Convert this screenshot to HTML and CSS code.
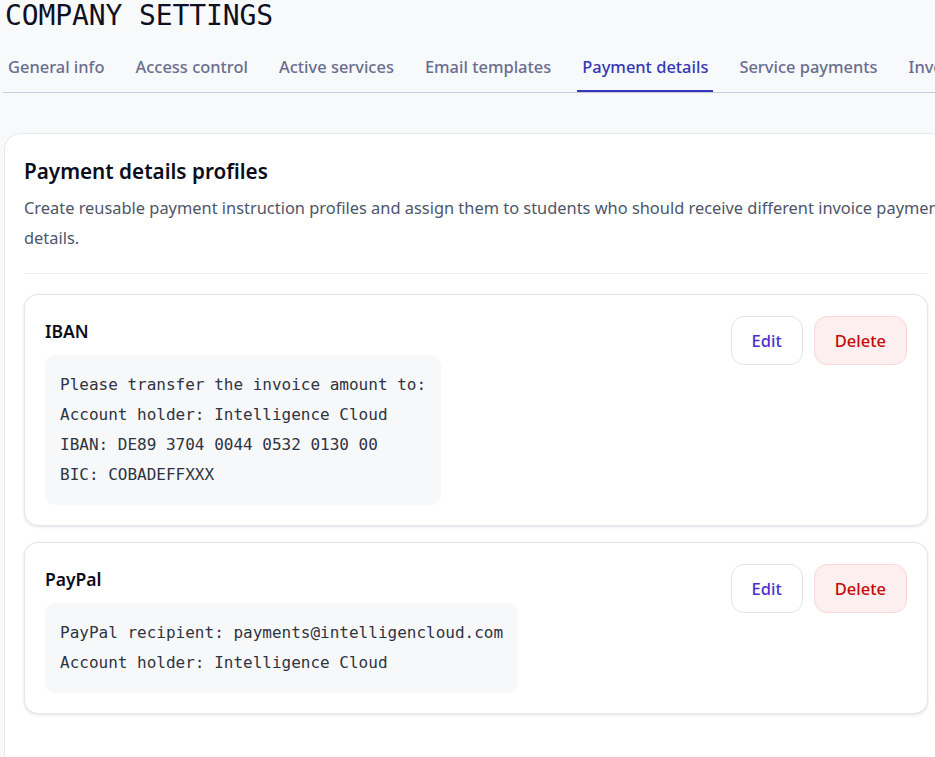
FILE: index.html
```html
<!DOCTYPE html>
<html lang="en">
<head>
<meta charset="utf-8">
<title>Company settings</title>
<link rel="stylesheet" href="styles.css">
</head>
<body>
<div class="page">
  <h1 class="page-title">COMPANY SETTINGS</h1>
  <nav class="tabs">
    <a class="tab">General info</a>
    <a class="tab">Access control</a>
    <a class="tab">Active services</a>
    <a class="tab">Email templates</a>
    <a class="tab tab-active">Payment details</a>
    <a class="tab">Service payments</a>
    <a class="tab">Invoices</a>
  </nav>
  <section class="panel">
    <h2 class="panel-title">Payment details profiles</h2>
    <p class="panel-desc">Create reusable payment instruction profiles and assign them to students who should receive different invoice payment details.</p>
    <hr class="divider">
    <div class="profiles">
      <article class="profile">
        <div class="profile-main">
          <h3 class="profile-name">IBAN</h3>
          <pre class="profile-text">Please transfer the invoice amount to:
Account holder: Intelligence Cloud
IBAN: DE89 3704 0044 0532 0130 00
BIC: COBADEFFXXX</pre>
        </div>
        <div class="actions">
          <button class="btn btn-edit">Edit</button>
          <button class="btn btn-delete">Delete</button>
        </div>
      </article>
      <article class="profile">
        <div class="profile-main">
          <h3 class="profile-name">PayPal</h3>
          <pre class="profile-text">PayPal recipient: payments@intelligencloud.com
Account holder: Intelligence Cloud</pre>
        </div>
        <div class="actions">
          <button class="btn btn-edit">Edit</button>
          <button class="btn btn-delete">Delete</button>
        </div>
      </article>
    </div>
  </section>
</div>
</body>
</html>
```
FILE: styles.css
```css
* { box-sizing: border-box; }
html, body {
  margin: 0;
  padding: 0;
  background: #f8f9fb;
  font-family: "Noto Sans", "Open Sans", sans-serif;
  overflow: hidden;
}
.page {
  width: 960px;
  padding-left: 3px;
}
.page-title {
  margin: 0 0 0 2px;
  font-family: "DejaVu Sans Mono", monospace;
  font-weight: 400;
  font-size: 28px;
  line-height: 32px;
  color: #0f1022;
  letter-spacing: -0.1px;
}
.tabs {
  margin-top: 12px;
  display: flex;
  gap: 21px;
  border-bottom: 1px solid #c9cadb;
  white-space: nowrap;
}
.tab {
  padding: 11px 5px 11px;
  border-bottom: 2px solid transparent;
  font-size: 16.45px;
  line-height: 24px;
  font-weight: 500;
  color: #6a6e8e;
}
.tab-active {
  color: #3538b4;
  border-bottom-color: #3538b4;
}
.panel {
  margin-top: 40px;
  margin-left: 1px;
  background: #fff;
  border: 1px solid #e6e8ee;
  border-radius: 16px;
  padding: 23px 19px 60px;
  width: 944px;
}
.panel-title {
  margin: 0;
  font-size: 20.7px;
  line-height: 28px;
  font-weight: 600;
  color: #0b0d1c;
}
.panel-desc {
  margin: 8px 0 0;
  width: 950px;
  font-size: 16.4px;
  line-height: 30px;
  color: #4d5569;
}
.divider {
  margin: 20px 0 20px;
  border: 0;
  border-top: 1px solid #eef0f4;
}
.profiles {
  display: flex;
  flex-direction: column;
  gap: 16px;
}
.profile {
  display: flex;
  justify-content: space-between;
  align-items: flex-start;
  border: 1px solid #e2e5ee;
  border-radius: 14px;
  padding: 20px;
  background: #fff;
  box-shadow: 0 1px 3px rgba(20, 24, 40, 0.12);
}
.profile-name {
  margin: 0 0 8px;
  font-size: 17.5px;
  line-height: 32px;
  font-weight: 600;
  color: #0b0d1c;
}
.profile-text {
  margin: 0;
  width: fit-content;
  padding: 15px;
  background: #f7f8fa;
  border-radius: 10px;
  font-family: "DejaVu Sans Mono", monospace;
  font-size: 16px;
  line-height: 30px;
  color: #2f3442;
}
.actions {
  display: flex;
  gap: 11px;
  margin-top: 1px;
}
.btn {
  height: 49px;
  padding: 0 20px;
  border-radius: 13px;
  font-family: inherit;
  font-size: 16.5px;
  font-weight: 500;
  cursor: pointer;
}
.btn-edit {
  background: #fff;
  border: 1px solid #dfe3ef;
  color: #4b2fd2;
}
.btn-delete {
  background: #fdefef;
  border: 1px solid #f9d7d7;
  color: #c40a0a;
}
```
